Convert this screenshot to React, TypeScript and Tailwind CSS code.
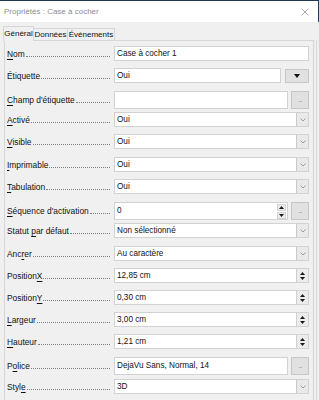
import React from "react";

const F = "font-['Liberation_Sans',Arial,sans-serif]";

function Label({ text, u }: { text: string; u: number }) {
  const content =
    u < 0 ? (
      text
    ) : (
      <>
        {text.slice(0, u)}
        <span className="underline underline-offset-[1.5px]">{text[u]}</span>
        {text.slice(u + 1)}
      </>
    );
  return (
    <div className="w-[107px] h-full flex items-center">
      <span className="whitespace-nowrap text-[8.4px] leading-[10px] text-[#111]">{content}</span>
      <span className="flex-1 h-0 mt-[5px] ml-[1px] mr-[4px] border-b border-dotted border-[#7d7d7d]" />
    </div>
  );
}

function Chevron() {
  return (
    <svg width="6" height="4" viewBox="0 0 6 4">
      <polyline points="0.5,0.5 3,3 5.5,0.5" fill="none" stroke="#8a8a8a" strokeWidth="0.8" />
    </svg>
  );
}

function SpinBtns({ w }: { w: string }) {
  return (
    <div className={`${w} h-full flex flex-col items-center justify-center gap-[2px] bg-[#ececec] border-l border-[#cfcfcf]`}>
      <svg width="5" height="3" viewBox="0 0 5 3">
        <polygon points="0,3 2.5,0 5,3" fill="#1a1a1a" />
      </svg>
      <svg width="5" height="3" viewBox="0 0 5 3">
        <polygon points="0,0 2.5,3 5,0" fill="#1a1a1a" />
      </svg>
    </div>
  );
}

function Text({ v }: { v: string }) {
  return <span className="flex-1 pl-[2px] text-[8.2px] leading-[10px] text-[#111] whitespace-nowrap overflow-hidden">{v}</span>;
}

function SelectBox({ v }: { v: string }) {
  return (
    <div className="w-[195px] h-[15px] bg-white border border-[#d2d2d2] flex items-center">
      <Text v={v} />
      <div className="w-[12px] h-full flex items-center justify-center bg-[#e9e9e9] border-l border-[#c9c9c9]">
        <Chevron />
      </div>
    </div>
  );
}

function SpinBox({ v }: { v: string }) {
  return (
    <div className="w-[195px] h-[15px] bg-white border border-[#d2d2d2] flex items-center">
      <Text v={v} />
      <SpinBtns w="w-[12px]" />
    </div>
  );
}

function DotsBtn() {
  return (
    <div className="ml-[3px] w-[18px] h-[18px] bg-[#e1e1e1] border border-[#c6c6c6] flex items-end justify-center pb-[5px]">
      <span className="text-[6px] leading-[6px] text-[#555] tracking-[-0.5px]">...</span>
    </div>
  );
}

function Row({ step, tall, label, u, children }: { step: string; tall?: boolean; label: string; u: number; children: React.ReactNode }) {
  return (
    <div className={`flex items-start ${step}`}>
      <div className={`flex ${tall ? "h-[18px]" : "h-[15px]"}`}>
        <Label text={label} u={u} />
      </div>
      <div className="flex">{children}</div>
    </div>
  );
}

export default function App() {
  return (
    <div className={`w-[319px] h-[400px] overflow-hidden bg-[#f0f0f0] ${F} flex flex-col`}>
      <div className="h-px bg-[#1f3654] shrink-0" />
      <div className="h-[21px] shrink-0 bg-white flex items-center justify-between pl-[4px] pr-[9px] border-r border-[#2a3f5e]">
        <span className="text-[8px] leading-[10px] text-[#8e8e8e]">Propriétés : Case à cocher</span>
        <svg width="8" height="8" viewBox="0 0 8 8">
          <line x1="0.5" y1="0.5" x2="7.5" y2="7.5" stroke="#8a8a8a" strokeWidth="0.7" />
          <line x1="7.5" y1="0.5" x2="0.5" y2="7.5" stroke="#8a8a8a" strokeWidth="0.7" />
        </svg>
      </div>
      <div className="flex flex-1">
        <div className="w-[314px] pl-[3px] pt-[4px] flex flex-col">
          <div className="flex items-end h-[15px] -mb-px relative z-10">
            <div className="w-[31px] h-[15px] bg-[#f0f0f0] border-t border-l border-r border-[#d6d6d6] flex items-center justify-center text-[8px] leading-[10px] text-[#111] pb-[1px]">
              Général
            </div>
            <div className="w-[34px] h-[13px] bg-[#f0f0f0] border-t border-r border-b border-[#d6d6d6] flex items-center justify-center text-[8px] leading-[10px] text-[#111]">
              Données
            </div>
            <div className="w-[47px] h-[13px] bg-[#f0f0f0] border-t border-r border-b border-[#d6d6d6] flex items-center justify-center text-[8px] leading-[10px] text-[#111]">
              Événements
            </div>
          </div>
          <div className="ml-[1px] w-[310px] flex-1 border border-[#d6d6d6] pt-[5px] pl-[2px] flex flex-col">
            <Row step="h-[22px]" label="Nom" u={0}>
              <div className="w-[195px] h-[15px] bg-white border border-[#d2d2d2] flex items-center">
                <Text v="Case à cocher 1" />
              </div>
            </Row>
            <Row step="h-[23px]" label="Étiquette" u={-1}>
              <div className="w-[167px] h-[15px] bg-white border border-[#d2d2d2] flex items-center">
                <Text v="Oui" />
              </div>
              <div className="ml-[4px] w-[24px] h-[14px] mt-[1px] bg-[#e1e1e1] border border-[#c6c6c6] flex items-center justify-center">
                <svg width="6" height="4" viewBox="0 0 6 4">
                  <polygon points="0,0 6,0 3,4" fill="#111" />
                </svg>
              </div>
            </Row>
            <Row step="h-[21px]" tall label="Champ d'étiquette" u={0}>
              <div className="w-[174px] h-[18px] bg-white border border-[#d2d2d2]" />
              <DotsBtn />
            </Row>
            <Row step="h-[22px]" label="Activé" u={0}>
              <SelectBox v="Oui" />
            </Row>
            <Row step="h-[23px]" label="Visible" u={0}>
              <SelectBox v="Oui" />
            </Row>
            <Row step="h-[22px]" label="Imprimable" u={0}>
              <SelectBox v="Oui" />
            </Row>
            <Row step="h-[23px]" label="Tabulation" u={0}>
              <SelectBox v="Oui" />
            </Row>
            <Row step="h-[21px]" tall label="Séquence d'activation" u={0}>
              <div className="w-[174px] h-[18px] bg-white border border-[#d2d2d2] flex items-center">
                <Text v="0" />
                <div className="w-[10px] h-full flex flex-col items-center justify-center gap-[1px] mr-[1px]">
                  <div className="w-[9px] h-[7px] bg-[#ececec] border border-[#d4d4d4] flex items-center justify-center">
                    <svg width="5" height="3" viewBox="0 0 5 3">
                      <polygon points="0,3 2.5,0 5,3" fill="#1a1a1a" />
                    </svg>
                  </div>
                  <div className="w-[9px] h-[7px] bg-[#ececec] border border-[#d4d4d4] flex items-center justify-center">
                    <svg width="5" height="3" viewBox="0 0 5 3">
                      <polygon points="0,0 2.5,3 5,0" fill="#1a1a1a" />
                    </svg>
                  </div>
                </div>
              </div>
              <DotsBtn />
            </Row>
            <Row step="h-[23px]" label="Statut par défaut" u={7}>
              <SelectBox v="Non sélectionné" />
            </Row>
            <Row step="h-[22px]" label="Ancrer" u={3}>
              <SelectBox v="Au caractère" />
            </Row>
            <Row step="h-[22px]" label="PositionX" u={8}>
              <SpinBox v="12,85 cm" />
            </Row>
            <Row step="h-[22px]" label="PositionY" u={8}>
              <SpinBox v="0,30 cm" />
            </Row>
            <Row step="h-[22px]" label="Largeur" u={0}>
              <SpinBox v="3,00 cm" />
            </Row>
            <Row step="h-[23px]" label="Hauteur" u={0}>
              <SpinBox v="1,21 cm" />
            </Row>
            <Row step="h-[22px]" tall label="Police" u={1}>
              <div className="w-[174px] h-[18px] bg-white border border-[#d2d2d2] flex items-center">
                <Text v="DejaVu Sans, Normal, 14" />
              </div>
              <DotsBtn />
            </Row>
            <Row step="h-[22px]" label="Style" u={4}>
              <SelectBox v="3D" />
            </Row>
          </div>
        </div>
        <div className="w-[5px] flex">
          <div className="ml-[2px] mt-[18px] w-px bg-[#d8d8d8]" />
        </div>
      </div>
    </div>
  );
}
